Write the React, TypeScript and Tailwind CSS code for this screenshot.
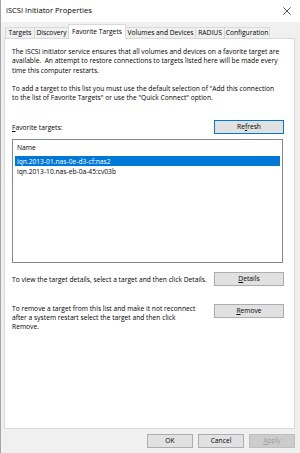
import React from 'react';

const font = { fontFamily: '"Open Sans", "Noto Sans", "Liberation Sans", sans-serif' };

const tabs = [
  { label: 'Targets', w: 'w-[30px]' },
  { label: 'Discovery', w: 'w-[35px]' },
  { label: 'Favorite Targets', w: 'w-[58px]', active: true },
  { label: 'Volumes and Devices', w: 'w-[71px]' },
  { label: 'RADIUS', w: 'w-[30px]' },
  { label: 'Configuration', w: 'w-[46px]' },
];

function Btn({ children, focused, disabled, className = '' }: { children: React.ReactNode; focused?: boolean; disabled?: boolean; className?: string }) {
  return (
    <button
      className={`h-[14px] flex items-center justify-center border text-[6.7px] leading-none ${
        focused ? 'border-[#0078d7] bg-[#e1e1e1]' : disabled ? 'border-[#bfbfbf] bg-[#cccccc] text-[#a0a0a0]' : 'border-[#adadad] bg-[#e1e1e1]'
      } ${className}`}
    >
      {children}
    </button>
  );
}

export default function App() {
  return (
    <div className="w-[300px] h-[453px] bg-[#f0f0f0] text-black flex flex-col border-l border-[#a5a5a5] overflow-hidden" style={font}>
      {/* title bar */}
      <div className="h-[22px] bg-white flex items-center justify-between pl-[5px] pr-[9px]">
        <span className="text-[7.6px]">iSCSI Initiator Properties</span>
        <svg width="8" height="8" viewBox="0 0 10 10" stroke="#222" strokeWidth="1">
          <path d="M0.5 0.5 L9.5 9.5 M9.5 0.5 L0.5 9.5" />
        </svg>
      </div>

      <div className="flex-1 flex flex-col pl-[3px] pr-[5px] pt-[2px] pb-[5px]">
        {/* tabs */}
        <div className="flex items-end h-[14px] pl-[1px] relative z-10">
          {tabs.map((t) => (
            <div
              key={t.label}
              className={`${t.w} shrink-0 flex items-center justify-center whitespace-nowrap text-[6.7px] border border-b-0 ${
                t.active ? 'bg-white border-[#d9d9d9] -mb-[1px] h-[15px] -mr-[1px]' : 'h-[11px] bg-[#f0f0f0] border-[#d9d9d9] -mr-[1px]'
              }`}
            >
              {t.label}
            </div>
          ))}
        </div>

        {/* panel */}
        <div className="h-[391px] bg-white border border-[#d9d9d9] pl-[7px] pr-[11px] pt-[8px] text-[6.7px] leading-[9.3px]">
          <p className="whitespace-nowrap">
            The iSCSI initiator service ensures that all volumes and devices on a favorite target are
            <br />
            available.&nbsp; An attempt to restore connections to targets listed here will be made every
            <br />
            time this computer restarts.
          </p>
          <p className="whitespace-nowrap mt-[9px]">
            To add a target to this list you must use the default selection of "Add this connection
            <br />
            to the list of Favorite Targets" or use the "Quick Connect" option.
          </p>

          <div className="flex items-center justify-between mt-[18px]">
            <span>
              <span className="underline">F</span>avorite targets:
            </span>
            <Btn focused className="w-[70px] -mr-[1px]">
              Re<span className="underline">f</span>resh
            </Btn>
          </div>

          <div className="mt-[5px] h-[124px] border border-[#828790] px-[2px] pt-[2px]">
            <div className="h-[10px] pl-[2px] flex items-center">Name</div>
            <div className="mt-[4px] h-[10px] bg-[#0078d7] text-white pl-[2px] flex items-center">iqn.2013-01.nas-0e-d3-cf:nas2</div>
            <div className="h-[10px] pl-[2px] flex items-center">iqn.2013-10.nas-eb-0a-45:cv03b</div>
          </div>

          <div className="flex items-center justify-between mt-[9px]">
            <span className="whitespace-nowrap">To view the target details, select a target and then click Details.</span>
            <Btn className="w-[70px] shrink-0 -mr-[1px]">
              <span className="underline">D</span>etails
            </Btn>
          </div>

          <div className="flex items-start justify-between mt-[18px]">
            <p className="whitespace-nowrap leading-[8.6px] pt-[1px]">
              To remove a target from this list and make it not reconnect
              <br />
              after a system restart select the target and then click
              <br />
              Remove.
            </p>
            <Btn className="w-[70px] shrink-0 -mr-[1px]">
              <span className="underline">R</span>emove
            </Btn>
          </div>
        </div>

        {/* bottom buttons */}
        <div className="flex justify-end gap-[5px] mt-[5px]">
          <Btn className="w-[46px]">OK</Btn>
          <Btn className="w-[46px]">Cancel</Btn>
          <Btn disabled className="w-[46px]">
            <span className="underline">A</span>pply
          </Btn>
        </div>
      </div>
    </div>
  );
}
